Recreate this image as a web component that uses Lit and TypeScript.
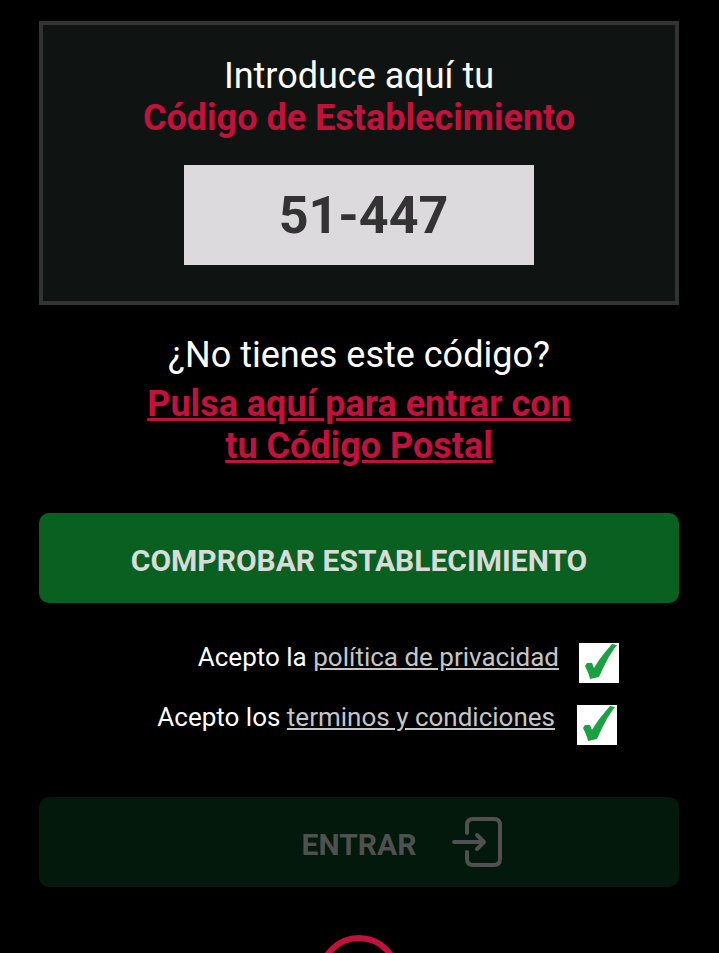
import { css, html, LitElement } from "lit";
import { customElement } from "lit/decorators.js";

const check = html`<svg viewBox="0 0 40 40" width="40" height="40">
  <path d="M6 23 L8 20 L13 20 L15 25 C20 16 27 8 33 1 L38 2 C30 12 25 23 20 34 L11 36 C10 31 8 27 6 23 Z" fill="#1ba142"></path>
</svg>`;

@customElement("app-root")
export class AppRoot extends LitElement {
  static styles = css`
    :host {
      display: block;
      height: 953px;
      overflow: hidden;
      background: #000;
      font-family: Roboto, sans-serif;
      color: #fff;
    }
    .page {
      padding: 21px 40px 0 39px;
      display: flex;
      flex-direction: column;
    }
    .panel {
      height: 284px;
      box-sizing: border-box;
      border: 4px solid #333;
      background: #0f1412;
      display: flex;
      flex-direction: column;
      align-items: center;
      padding-top: 30px;
    }
    .title {
      font-size: 36px;
      line-height: 42px;
      text-align: center;
    }
    .red {
      color: #c2113a;
      font-weight: 700;
    }
    .code {
      width: 350px;
      height: 100px;
      margin-top: 26px;
      background: #dcdadd;
      color: #333;
      font-size: 52px;
      font-weight: 700;
      display: flex;
      align-items: center;
      justify-content: center;
      padding-left: 9px;
      box-sizing: border-box;
    }
    .ask {
      margin-top: 29px;
      text-align: center;
      font-size: 36px;
      line-height: 42px;
    }
    .ask a {
      display: block;
      margin-top: 7px;
      text-decoration: underline;
    }
    .btn {
      height: 90px;
      border-radius: 10px;
      display: flex;
      align-items: center;
      justify-content: center;
      font-size: 30px;
      font-weight: 700;
    }
    .check-btn {
      margin-top: 46px;
      background: #0a6020;
      color: #d8dcd8;
      padding-top: 5px;
      box-sizing: border-box;
    }
    .terms {
      margin-top: 40px;
      display: flex;
      flex-direction: column;
      gap: 22px;
      font-size: 26px;
    }
    .row {
      display: flex;
      justify-content: flex-end;
      align-items: flex-start;
      gap: 20px;
      line-height: 29px;
    }
    .row.first {
      padding-right: 60px;
    }
    .row.second {
      padding-right: 62px;
      gap: 22px;
    }
    .row.second span {
      margin-top: -2px;
    }
    .row a {
      color: #c6c6c6;
      text-decoration: underline;
    }
    .box {
      width: 40px;
      height: 40px;
      background: #fff;
      flex: none;
    }
    .box svg {
      display: block;
      overflow: visible;
    }
    .enter {
      margin-top: 52px;
      background: #02190b;
      color: #505050;
      gap: 36px;
      padding-left: 86px;
      box-sizing: border-box;
    }
    .enter span {
      margin-top: 5px;
    }
    .enter svg {
      display: block;
    }
    .logo {
      margin: 48px auto 0;
      width: 82px;
      height: 82px;
      border: 6px solid #c2113a;
      border-radius: 50%;
      box-sizing: border-box;
    }
  `;

  render() {
    return html`
      <div class="page">
        <div class="panel">
          <div class="title">Introduce aquí tu<br /><span class="red">Código de Establecimiento</span></div>
          <div class="code">51-447</div>
        </div>
        <div class="ask">
          ¿No tienes este código?
          <a class="red">Pulsa aquí para entrar con<br />tu Código Postal</a>
        </div>
        <div class="btn check-btn">COMPROBAR ESTABLECIMIENTO</div>
        <div class="terms">
          <div class="row first">
            <span>Acepto la <a>política de privacidad</a></span>
            <div class="box">${check}</div>
          </div>
          <div class="row second">
            <span>Acepto los <a>terminos y condiciones</a></span>
            <div class="box">${check}</div>
          </div>
        </div>
        <div class="btn enter">
          <span>ENTRAR</span>
          <svg viewBox="0 0 50 50" width="50" height="50" fill="none" stroke="#505050" stroke-width="4" stroke-linecap="round" stroke-linejoin="round">
            <path d="M15 16 V8 Q15 2 21 2 H42 Q48 2 48 8 V42 Q48 48 42 48 H21 Q15 48 15 42 V35"></path>
            <path d="M2 25 H32 M25 18 L32 25 L25 32"></path>
          </svg>
        </div>
        <div class="logo"></div>
      </div>
    `;
  }
}
